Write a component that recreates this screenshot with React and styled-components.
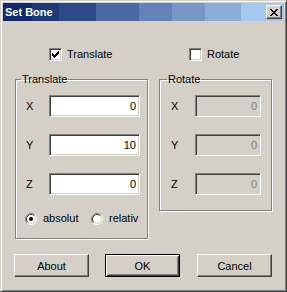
import React from 'react';
import styled, { createGlobalStyle } from 'styled-components';

const Global = createGlobalStyle`
  html, body { margin: 0; padding: 0; background: #d4d0c8; }
  body { font-family: "Liberation Sans", Arial, sans-serif; font-size: 11px; }
  * { box-sizing: border-box; }
`;

const Window = styled.div`
  width: 287px;
  height: 292px;
  background: #d4d0c8;
  border: 1px solid;
  border-color: #d4d0c8 #404040 #404040 #d4d0c8;
  box-shadow: inset 1px 1px #fff, inset -1px -1px #808080;
  padding: 2px;
  display: flex;
  flex-direction: column;
  font-family: "Liberation Sans", Arial, sans-serif;
  font-size: 11px;
  line-height: 13px;
  color: #000;
`;

const TitleBar = styled.div`
  height: 18px;
  flex: none;
  display: flex;
  align-items: center;
  padding: 0 2px;
  background: linear-gradient(
    to right,
    #10296c 0 29px,
    #1d3978 29px 56px,
    #2e4a89 56px 93px,
    #4b69a3 93px 136px,
    #6482b8 136px 169px,
    #7896c6 169px 202px,
    #8baed9 202px 238px,
    #a5c8ef 238px
  );
`;

const Title = styled.span`
  color: #fff;
  font-weight: bold;
  font-size: 11px;
`;

const CloseButton = styled.button`
  margin-left: auto;
  width: 16px;
  height: 14px;
  padding: 0;
  display: flex;
  align-items: center;
  justify-content: center;
  background: #d4d0c8;
  border: 1px solid;
  border-color: #fff #404040 #404040 #fff;
  box-shadow: inset -1px -1px #808080, inset 1px 1px #d4d0c8;
`;

const Body = styled.div`
  display: flex;
  flex-direction: column;
  padding: 27px 12px 0;
`;

const TopGrid = styled.div`
  display: grid;
  grid-template-columns: 133px 113px;
  column-gap: 11px;
  row-gap: 12px;
  align-items: start;
`;

const CheckCell = styled.label`
  display: flex;
  align-items: center;
  gap: 5px;
  height: 13px;
  padding-left: ${(p) => p.$indent}px;
`;

const CheckBox = styled.span`
  width: 13px;
  height: 13px;
  flex: none;
  display: flex;
  align-items: center;
  justify-content: center;
  background: #fff;
  border: 1px solid;
  border-color: #808080 #fff #fff #808080;
  box-shadow: inset 1px 1px #404040, inset -1px -1px #d4d0c8;
`;

const Group = styled.fieldset`
  margin: 0;
  padding: 0;
  min-width: 0;
  border: 1px solid #808080;
  box-shadow: inset 1px 1px #fff, 1px 1px #fff;
`;

const Legend = styled.legend`
  padding: 0 1px;
  margin-left: ${(p) => p.$offset}px;
  line-height: 13px;
  font-size: 11px;
`;

const GroupContent = styled.div`
  display: grid;
  row-gap: 17px;
  padding: 9px 0 ${(p) => p.$bottom}px ${(p) => p.$left}px;
`;

const FieldRow = styled.div`
  display: grid;
  grid-template-columns: ${(p) => p.$labelWidth}px ${(p) => p.$inputWidth}px;
  align-items: center;
  height: 22px;
`;

const AxisLabel = styled.span`
  font-size: 11px;
`;

const Edit = styled.input`
  width: 100%;
  height: 22px;
  margin: 0;
  padding: 0 3px 0 3px;
  text-align: right;
  font-family: "Liberation Sans", Arial, sans-serif;
  font-size: 11px;
  color: #000;
  background: #fff;
  border: 1px solid;
  border-color: #808080 #fff #fff #808080;
  box-shadow: inset 1px 1px #404040, inset -1px -1px #d4d0c8;
  outline: none;
  &:disabled {
    background: #d4d0c8;
    color: #808080;
    -webkit-text-fill-color: #808080;
    opacity: 1;
  }
`;

const RadioRow = styled.div`
  display: grid;
  grid-template-columns: 66px auto;
  align-items: center;
  height: 13px;
  margin-left: -1px;
`;

const RadioOption = styled.label`
  display: flex;
  align-items: center;
  gap: 6px;
`;

const ButtonRow = styled.div`
  display: flex;
  gap: 16px;
  margin: 15px 0 0 -1px;
`;

const PushButton = styled.button`
  width: 75px;
  height: 23px;
  padding: 0;
  margin-left: ${(p) => (p.$pushRight ? 'auto' : '0')};
  font-family: "Liberation Sans", Arial, sans-serif;
  font-size: 11px;
  color: #000;
  background: #d4d0c8;
  border: 1px solid;
  border-color: ${(p) => (p.$default ? '#000' : '#fff #404040 #404040 #fff')};
  box-shadow: ${(p) =>
    p.$default
      ? 'inset 1px 1px #fff, inset -1px -1px #404040, inset 2px 2px #d4d0c8, inset -2px -2px #808080'
      : 'inset -1px -1px #808080, inset 1px 1px #d4d0c8'};
`;

const CloseGlyph = () => (
  <svg width="8" height="7" viewBox="0 0 8 7" shapeRendering="crispEdges">
    <path
      fill="#000"
      d="M0 0h2v1H0zM6 0h2v1H6zM1 1h2v1H1zM5 1h2v1H5zM2 2h4v1H2zM3 3h2v1H3zM2 4h4v1H2zM1 5h2v1H1zM5 5h2v1H5zM0 6h2v1H0zM6 6h2v1H6z"
    />
  </svg>
);

const CheckGlyph = () => (
  <svg width="7" height="7" viewBox="0 0 7 7" shapeRendering="crispEdges">
    <path
      fill="#000"
      d="M6 0h1v1H6zM5 1h2v1H5zM0 2h1v1H0zM4 2h3v1H4zM0 3h2v1H0zM3 3h3v1H3zM0 4h5v1H0zM1 5h3v1H1zM2 6h1v1H2z"
    />
  </svg>
);

const RadioGlyph = ({ checked }) => (
  <svg width="12" height="12" viewBox="0 0 12 12">
    <circle cx="6" cy="6" r="5" fill="#fff" />
    <path d="M2.11 9.89A5.5 5.5 0 0 1 9.89 2.11" fill="none" stroke="#808080" strokeWidth="1" />
    <path d="M9.89 2.11A5.5 5.5 0 0 1 2.11 9.89" fill="none" stroke="#fff" strokeWidth="1" />
    <path d="M2.82 9.18A4.5 4.5 0 0 1 9.18 2.82" fill="none" stroke="#404040" strokeWidth="1" />
    <path d="M9.18 2.82A4.5 4.5 0 0 1 2.82 9.18" fill="none" stroke="#d4d0c8" strokeWidth="1" />
    {checked && <circle cx="6" cy="6" r="2" fill="#000" />}
  </svg>
);

const axes = [
  { name: 'X', t: '0', r: '0' },
  { name: 'Y', t: '10', r: '0' },
  { name: 'Z', t: '0', r: '0' },
];

export default function App() {
  return (
    <>
      <Global />
      <Window>
        <TitleBar>
          <Title>Set Bone</Title>
          <CloseButton aria-label="Close">
            <CloseGlyph />
          </CloseButton>
        </TitleBar>
        <Body>
          <TopGrid>
            <CheckCell $indent={34}>
              <CheckBox>
                <CheckGlyph />
              </CheckBox>
              Translate
            </CheckCell>
            <CheckCell $indent={30}>
              <CheckBox />
              Rotate
            </CheckCell>
            <Group>
              <Legend $offset={5}>Translate</Legend>
              <GroupContent $left={10} $bottom={13}>
                {axes.map((a) => (
                  <FieldRow key={a.name} $labelWidth={23} $inputWidth={91}>
                    <AxisLabel>{a.name}</AxisLabel>
                    <Edit defaultValue={a.t} />
                  </FieldRow>
                ))}
                <RadioRow>
                  <RadioOption>
                    <RadioGlyph checked />
                    absolut
                  </RadioOption>
                  <RadioOption>
                    <RadioGlyph />
                    relativ
                  </RadioOption>
                </RadioRow>
              </GroupContent>
            </Group>
            <Group>
              <Legend $offset={7}>Rotate</Legend>
              <GroupContent $left={11} $bottom={15}>
                {axes.map((a) => (
                  <FieldRow key={a.name} $labelWidth={24} $inputWidth={66}>
                    <AxisLabel>{a.name}</AxisLabel>
                    <Edit disabled defaultValue={a.r} />
                  </FieldRow>
                ))}
              </GroupContent>
            </Group>
          </TopGrid>
          <ButtonRow>
            <PushButton>About</PushButton>
            <PushButton $default>OK</PushButton>
            <PushButton $pushRight>Cancel</PushButton>
          </ButtonRow>
        </Body>
      </Window>
    </>
  );
}
